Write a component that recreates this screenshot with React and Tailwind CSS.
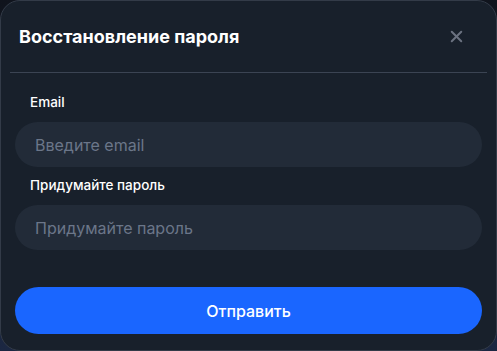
import { X } from "lucide-react";

export default function App() {
  return (
    <div className="w-[497px] h-[351px] bg-gradient-to-b from-[#10141d] to-[#1b2742] font-['Inter',sans-serif]">
      <div className="w-full h-full rounded-[20px] border border-[#333b48] bg-[#18202b] flex flex-col">
        {/* Header */}
        <div className="h-[71px] flex items-center justify-between pl-[18px] pr-[30px]">
          <h2 className="text-[18px] font-bold text-white leading-none">Восстановление пароля</h2>
          <X className="w-[19px] h-[19px] text-[#6b7280]" strokeWidth={2.5} />
        </div>
        <div className="mx-[9px] h-px bg-[#3b4453]" />

        {/* Form */}
        <div className="px-[14px] pt-[21px] flex flex-col">
          <label className="pl-[15px] text-[13.5px] font-medium text-white leading-4 mb-[12px]">Email</label>
          <input
            className="h-[45px] rounded-full bg-[#222b38] px-[20px] text-[16px] text-white placeholder:text-[#6b7689] outline-none"
            placeholder="Введите email"
          />
          <label className="pl-[15px] mt-[10px] text-[13.5px] font-medium text-white leading-4 mb-[12px]">Придумайте пароль</label>
          <input
            type="password"
            className="h-[45px] rounded-full bg-[#222b38] px-[20px] text-[16px] text-white placeholder:text-[#6b7689] outline-none"
            placeholder="Придумайте пароль"
          />
          <button className="mt-[37px] h-[47px] rounded-full bg-[#1a66ff] text-white text-[16px] font-medium">
            Отправить
          </button>
        </div>
      </div>
    </div>
  );
}
